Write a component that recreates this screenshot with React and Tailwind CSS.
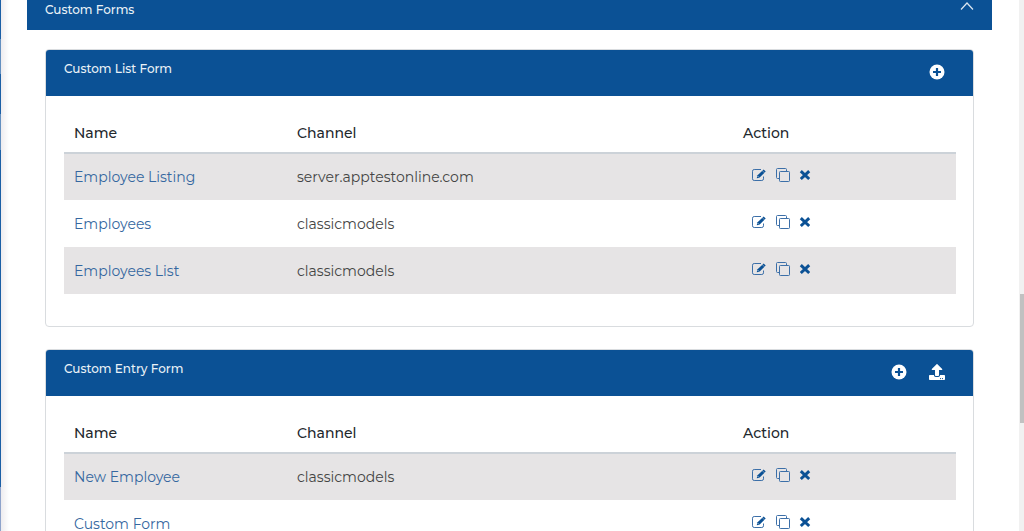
import { FaUpload } from "react-icons/fa";

const FONT = "font-['Montserrat','Inter',sans-serif]";

const listForms = [
  { name: "Employee Listing", channel: "server.apptestonline.com" },
  { name: "Employees", channel: "classicmodels" },
  { name: "Employees List", channel: "classicmodels" },
];

const entryForms = [
  { name: "New Employee", channel: "classicmodels" },
  { name: "Custom Form", channel: "" },
];

function PlusCircle() {
  return (
    <svg viewBox="0 0 16 16" className="size-4" aria-hidden="true">
      <circle cx="8" cy="8" r="7.5" fill="#fff" />
      <path d="M8 4v8M4 8h8" stroke="#0b5195" strokeWidth="2.2" />
    </svg>
  );
}

function EditIcon() {
  return (
    <svg viewBox="0 0 16 14" className="h-3.5 w-4" fill="none" aria-hidden="true">
      <path
        d="M10 1.5H3.2A1.7 1.7 0 0 0 1.5 3.2V10.8A1.7 1.7 0 0 0 3.2 12.5H10.8A1.7 1.7 0 0 0 12.5 10.8V8.5"
        stroke="#3c6fa8"
      />
      <path d="M5.8 10.200l.5-2.600L12.700 1.500l2 2-6.300 6.200z" fill="#0b5195" />
      <path d="M11.300 2.700l2.200 2.200" stroke="#e6e4e5" strokeWidth=".5" />
      <path d="M6.700 8.200l1.100 1.100" stroke="#fff" strokeWidth=".8" />
    </svg>
  );
}

function CopyIcon() {
  return (
    <svg viewBox="0 0 16 16" className="size-4" fill="none" stroke="#3c6fa8" aria-hidden="true">
      <path d="M4.500 11.500H2.500A1 1 0 0 1 1.500 10.500V2.500A1 1 0 0 1 2.500 1.500H10.500A1 1 0 0 1 11.500 2.500V4.500" />
      <rect x="4.500" y="4.500" width="10" height="10" rx=".8" />
    </svg>
  );
}

function CrossIcon() {
  return (
    <svg viewBox="0 0 12 12" className="size-3" aria-hidden="true">
      <path d="M1.800 2.200l8.400 7.800M10.200 2.200l-8.400 7.800" stroke="#0b5195" strokeWidth="3" />
    </svg>
  );
}

function FormTable({ rows }) {
  return (
    <table className="w-full table-fixed border-collapse text-left text-sm leading-6">
      <thead>
        <tr className="h-[38px] border-b-2 border-[#ccd2d8] text-[#23282d]">
          <th className="w-1/4 px-2.5 pb-0.5 font-medium">Name</th>
          <th className="w-1/2 px-2.5 pb-0.5 font-medium">Channel</th>
          <th className="w-1/4 px-2.5 pb-0.5 font-medium">Action</th>
        </tr>
      </thead>
      <tbody>
        {rows.map((row) => (
          <tr key={row.name} className="h-[47px] odd:bg-[#e6e4e5]">
            <td className="px-2.5">
              <a href="#form" className="text-[#3567a0]">{row.name}</a>
            </td>
            <td className="px-2.5 text-[#444]">{row.channel}</td>
            <td className="px-2.5">
              <div className="flex items-center gap-2 pb-1 pl-2">
                <button type="button" aria-label={"Edit " + row.name}><EditIcon /></button>
                <button type="button" aria-label={"Copy " + row.name}><CopyIcon /></button>
                <button type="button" aria-label={"Delete " + row.name}><CrossIcon /></button>
              </div>
            </td>
          </tr>
        ))}
      </tbody>
    </table>
  );
}

function FormCard({ title, upload, rows }) {
  return (
    <section className="overflow-hidden rounded border border-[#d9dcdf]">
      <header className="flex h-[46px] items-center justify-between bg-[#0b5195] pr-7 pb-0.5 pl-[18px] text-white">
        <h2 className="pb-1.5 text-xs leading-5 font-medium text-[#eaf1f7]">{title}</h2>
        <div className="flex items-center gap-[22px]">
          <button type="button" aria-label={"Add to " + title}><PlusCircle /></button>
          {upload && (
            <button type="button" aria-label="Upload form"><FaUpload className="size-4" /></button>
          )}
        </div>
      </header>
      <div className="pt-[19px] pr-[17px] pb-8 pl-[18px]">
        <FormTable rows={rows} />
      </div>
    </section>
  );
}

export default function App() {
  return (
    <div className={"flex h-screen overflow-hidden bg-white " + FONT}>
      <div className="flex w-px shrink-0 flex-col bg-[#1b5fa6]">
        <div className="h-[39px]" />
        <div className="h-[35px] bg-[#638fc0]" />
        <div className="h-10" />
        <div className="h-9 bg-[#638fc0]" />
        <div className="grow" />
        <div className="h-11 bg-[#8ea3cb]" />
      </div>
      <div className="w-2 shrink-0 bg-linear-to-r from-[#eeecef] to-white" />
      <main className="min-w-0 grow pr-[27px] pl-[18px]">
        <header className="flex h-[30px] items-start justify-between bg-[#0b5195] px-[18px] text-white">
          <h1 className="text-xs leading-5 font-medium text-[#eaf1f7]">Custom Forms</h1>
          <button type="button" aria-label="Collapse Custom Forms">
            <svg viewBox="0 0 14 12" className="h-3 w-3.5" fill="none" aria-hidden="true">
              <path d="M1 9.500L7 3l6 6.500" stroke="#dce6f0" strokeWidth="1.200" />
            </svg>
          </button>
        </header>
        <div className="flex flex-col gap-[22px] px-[18px] pt-[19px]">
          <FormCard title="Custom List Form" rows={listForms} />
          <FormCard title="Custom Entry Form" rows={entryForms} upload />
        </div>
      </main>
      <div className="flex w-[5px] shrink-0 flex-col bg-[#f1f1f1] pl-px" aria-hidden="true">
        <div className="basis-[55.400%]" />
        <div className="basis-[24.300%] bg-[#c1c1c1]" />
      </div>
    </div>
  );
}
